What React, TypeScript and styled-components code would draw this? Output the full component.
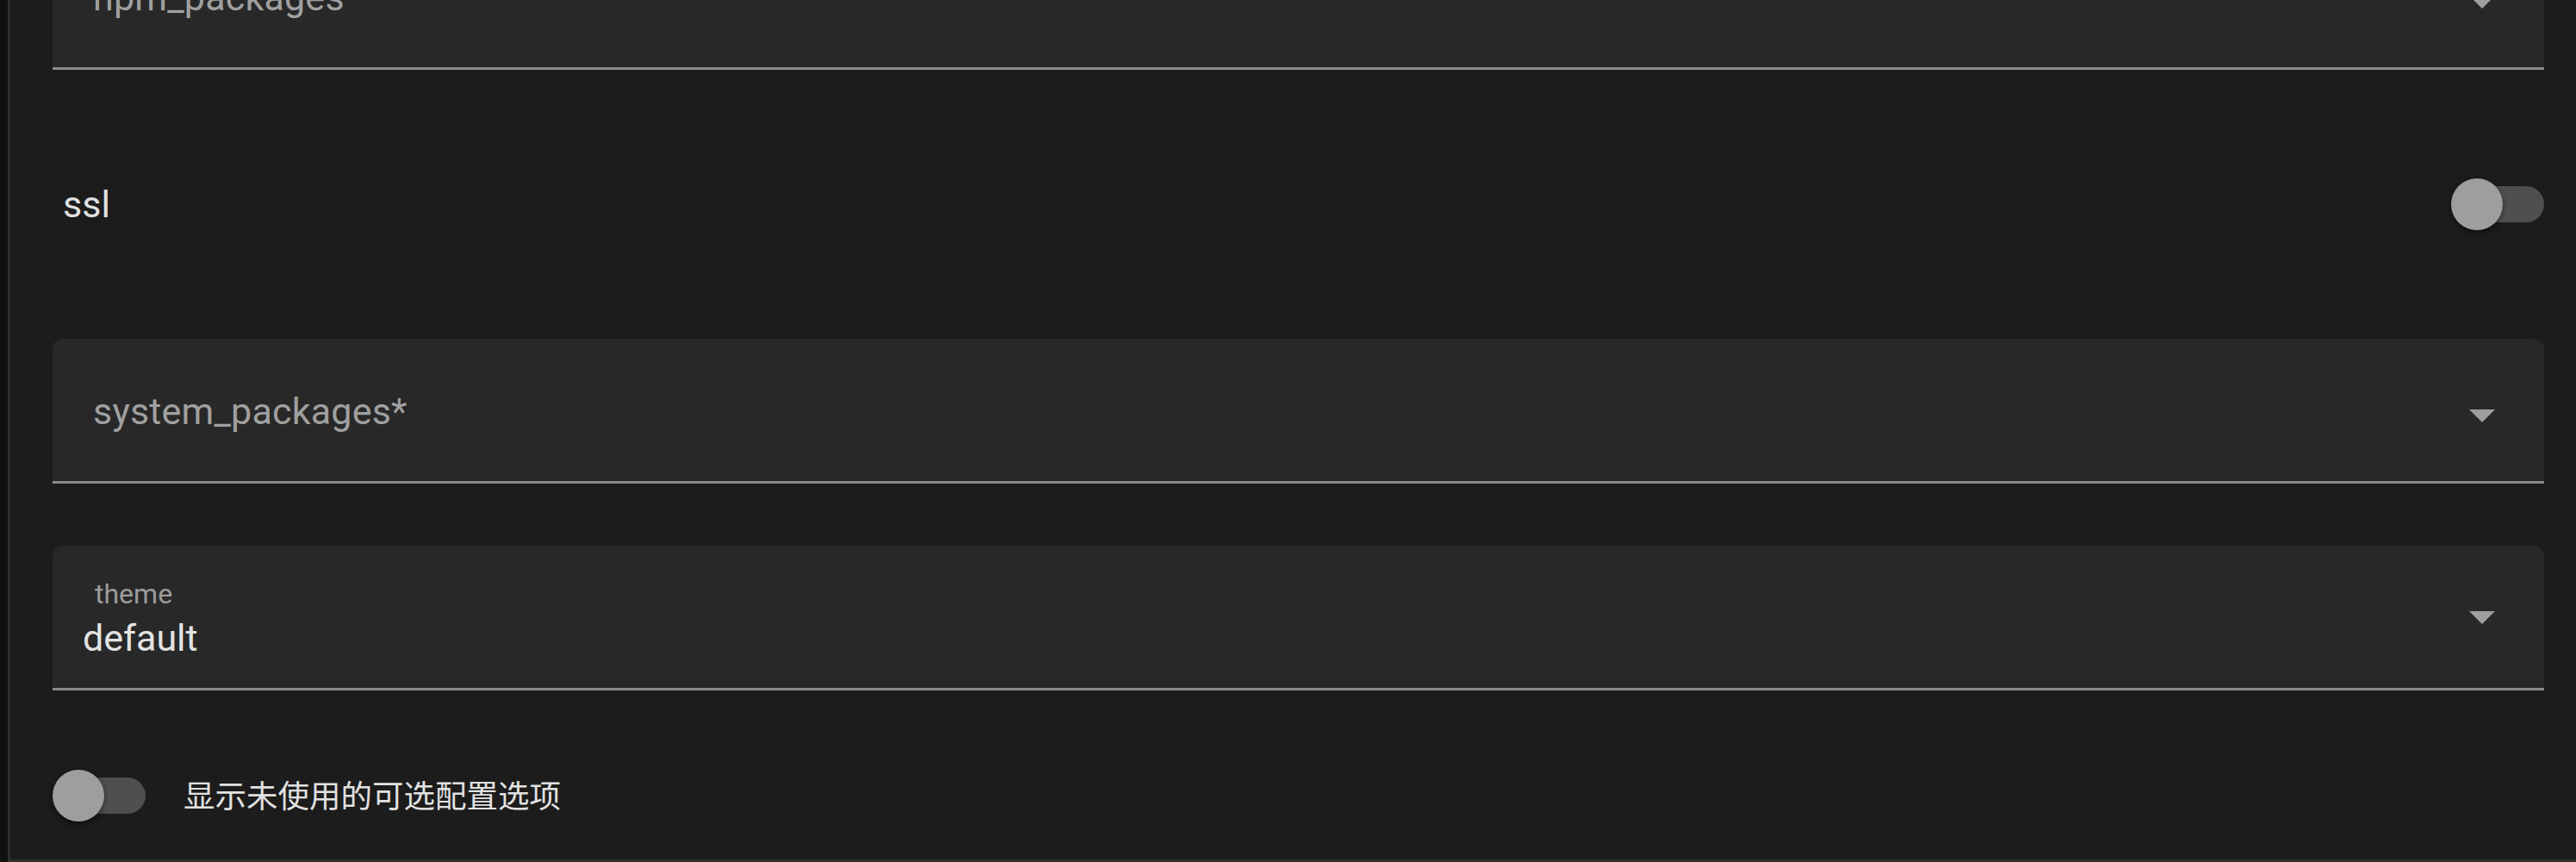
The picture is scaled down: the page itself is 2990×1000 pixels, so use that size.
import React from "react";
import styled, { createGlobalStyle } from "styled-components";

const GlobalStyle = createGlobalStyle`
  html, body {
    margin: 0;
    padding: 0;
    background: #111111;
    overflow: hidden;
  }
  body {
    font-family: Roboto, "Noto Sans CJK SC", "Noto Sans", sans-serif;
    -webkit-font-smoothing: antialiased;
  }
`;

type SelectProps = {
  label: string;
  value?: string;
};

function SelectField({ label, value }: SelectProps) {
  const floated = value !== undefined;
  return (
    <Field>
      <FieldText>
        {floated ? (
          <>
            <FloatLabel>{label}</FloatLabel>
            <Value>{value}</Value>
          </>
        ) : (
          <Placeholder>{label}</Placeholder>
        )}
      </FieldText>
      <Arrow floated={floated} />
    </Field>
  );
}

function Toggle() {
  return (
    <SwitchRoot>
      <Track />
      <Thumb />
    </SwitchRoot>
  );
}

function App() {
  return (
    <Page>
      <GlobalStyle />
      <Card>
        <SelectField label="npm_packages" />
        <SettingRow>
          <RowLabel>ssl</RowLabel>
          <Toggle />
        </SettingRow>
        <SelectField label="system_packages*" />
        <SelectField label="theme" value="default" />
        <FooterRow>
          <Toggle />
          <FooterText>显示未使用的可选配置选项</FooterText>
        </FooterRow>
      </Card>
    </Page>
  );
}

export default App;

const Page = styled.div`
  width: 2990px;
  height: 1000px;
  overflow: hidden;
  display: flex;
  align-items: flex-end;
  padding-left: 9px;
  box-sizing: border-box;
`;

const Card = styled.div`
  width: 2996px;
  flex-shrink: 0;
  box-sizing: border-box;
  background: #1c1c1c;
  border-left: 3px solid #2f2f2f;
  border-right: 3px solid #2f2f2f;
  border-bottom: 3px solid #2f2f2f;
  padding: 0 49px 24px;
  display: flex;
  flex-direction: column;
  gap: 72px;
`;

const Field = styled.div`
  position: relative;
  height: 168px;
  box-sizing: border-box;
  background: #282828;
  border-radius: 12px 12px 0 0;
  border-bottom: 3px solid #8a8a8a;
  display: flex;
  align-items: stretch;
`;

const FieldText = styled.div`
  flex: 1;
  display: flex;
  flex-direction: column;
`;

const Placeholder = styled.div`
  padding: 59px 0 0 47px;
  font-size: 43px;
  line-height: 50px;
  color: #a0a0a0;
  letter-spacing: 0.2px;
`;

const FloatLabel = styled.div`
  padding: 37px 0 0 49px;
  font-size: 32px;
  line-height: 38px;
  color: #9c9c9c;
`;

const Value = styled.div`
  padding: 7px 0 0 35px;
  font-size: 43px;
  line-height: 50px;
  color: #e3e3e3;
`;

const Arrow = styled.div<{ floated: boolean }>`
  width: 0;
  height: 0;
  margin: ${(p) => (p.floated ? "76px" : "82px")} 57px 0 0;
  border-left: 15px solid transparent;
  border-right: 15px solid transparent;
  border-top: 15px solid #9e9e9e;
`;

const SettingRow = styled.div`
  height: 168px;
  display: flex;
  align-items: center;
  justify-content: space-between;
  padding-left: 12px;
`;

const RowLabel = styled.div`
  font-size: 43px;
  color: #e1e1e1;
`;

const SwitchRoot = styled.div`
  position: relative;
  width: 108px;
  height: 60px;
  flex-shrink: 0;
`;

const Track = styled.div`
  position: absolute;
  left: 9px;
  top: 9px;
  width: 99px;
  height: 42px;
  border-radius: 21px;
  background: #4f4f4f;
`;

const Thumb = styled.div`
  position: absolute;
  left: 0;
  top: 0;
  width: 60px;
  height: 60px;
  border-radius: 50%;
  background: #9e9e9e;
  box-shadow: 0 3px 4px rgba(0, 0, 0, 0.35), 0 1px 8px rgba(0, 0, 0, 0.2);
`;

const FooterRow = styled.div`
  height: 100px;
  display: flex;
  align-items: center;
  gap: 44px;
`;

const FooterText = styled.div`
  font-family: "Noto Sans CJK SC", Roboto, sans-serif;
  font-size: 36.5px;
  line-height: 44px;
  margin-top: -2px;
  color: #e1e1e1;
`;
